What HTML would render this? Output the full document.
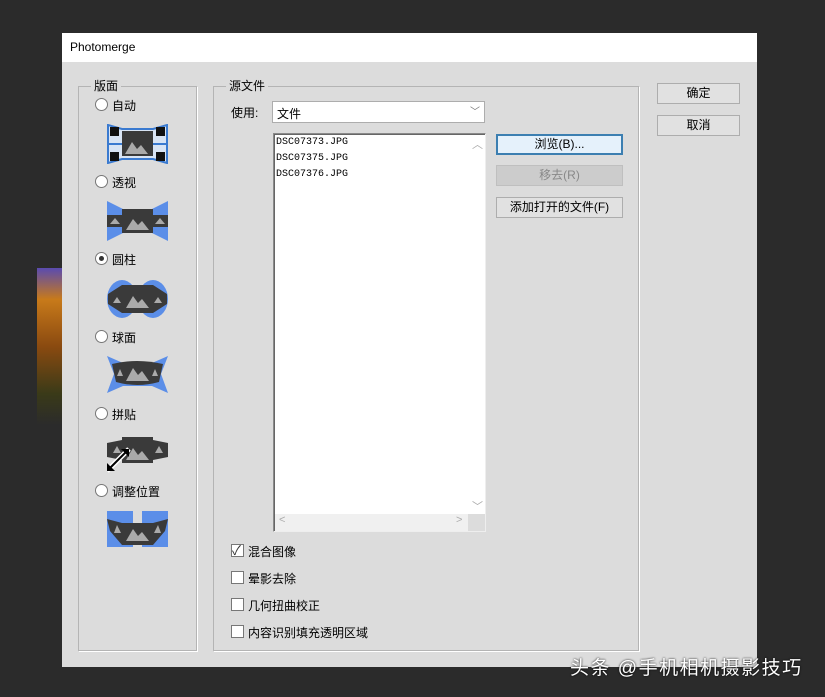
<!DOCTYPE html>
<html><head><meta charset="utf-8"><style>
*{margin:0;padding:0;box-sizing:border-box}
body{width:825px;height:697px;background:#2b2b2b;position:relative;overflow:hidden;font-family:"Liberation Sans","Noto Sans CJK SC",sans-serif;font-size:12px;color:#000}
.a{position:absolute}
.dlg{left:62px;top:33px;width:695px;height:634px;background:#dcdcdc}
.title{left:62px;top:33px;width:695px;height:29px;background:#fff;font-size:12px;padding:7px 0 0 8px}
.grp{border:1px solid #b4b4b4;box-shadow:1px 1px 0 #fff}
.lg{background:#dcdcdc;padding:0 3px;font-size:12px;line-height:13px}
.btn{background:#e1e1e1;border:1px solid #adadad;text-align:center;font-size:12px;line-height:19px}
.rad{width:13px;height:13px;border:1px solid #777;border-radius:50%;background:#fff}
.cb{width:13px;height:13px;border:1px solid #777;background:#fff}
.mono{font-family:"Liberation Mono","Noto Sans CJK SC",monospace;font-size:10px;line-height:16px}
</style></head><body>
<div class="a" style="left:37px;top:268px;width:25px;height:157px;background:linear-gradient(#5a4bb0 0,#c87a1a 20%,#8a4a10 50%,#3a3a18 80%,#2b2b2b 100%)"></div>
<div class="a dlg"></div>
<div class="a title">Photomerge</div>

<div class="a grp" style="left:78px;top:86px;width:119px;height:565px"></div>
<div class="a lg" style="left:91px;top:80px">版面</div>
<div class="a grp" style="left:213px;top:86px;width:426px;height:565px"></div>
<div class="a lg" style="left:226px;top:80px">源文件</div>

<div class="a btn" style="left:657px;top:83px;width:83px;height:21px">确定</div>
<div class="a btn" style="left:657px;top:115px;width:83px;height:21px">取消</div>

<div class="a rad" style="left:95px;top:98px"></div><div class="a" style="left:112px;top:97px">自动</div>
<div class="a rad" style="left:95px;top:175px"></div><div class="a" style="left:112px;top:174px">透视</div>
<div class="a rad" style="left:95px;top:252px"></div><div class="a" style="left:95px;top:252px;width:13px;height:13px;display:flex;align-items:center;justify-content:center"><div style="width:5px;height:5px;border-radius:50%;background:#333"></div></div><div class="a" style="left:112px;top:251px">圆柱</div>
<div class="a rad" style="left:95px;top:330px"></div><div class="a" style="left:112px;top:329px">球面</div>
<div class="a rad" style="left:95px;top:407px"></div><div class="a" style="left:112px;top:406px">拼贴</div>
<div class="a rad" style="left:95px;top:484px"></div><div class="a" style="left:112px;top:483px">调整位置</div>

<svg class="a" style="left:107px;top:124px" width="61" height="40" viewBox="0 0 61 40">
<path d="M1 1L15 5H46L60 1V39L46 35H15L1 39Z" fill="#d8e4f4" stroke="#3a7ad0" stroke-width="2"/>
<line x1="1" y1="20" x2="15" y2="20" stroke="#3a7ad0" stroke-width="2"/><line x1="46" y1="20" x2="60" y2="20" stroke="#3a7ad0" stroke-width="2"/>
<rect x="15" y="7" width="31" height="25" fill="#3a3a3a"/>
<path d="M18 30L25 18L30 25L34 21L41 30Z" fill="#aaa"/>
<rect x="3" y="3" width="9" height="9" fill="#111"/><rect x="49" y="3" width="9" height="9" fill="#111"/><rect x="3" y="28" width="9" height="9" fill="#111"/><rect x="49" y="28" width="9" height="9" fill="#111"/>
</svg>
<svg class="a" style="left:107px;top:201px" width="61" height="40" viewBox="0 0 61 40">
<path d="M0 0L16 8V32L0 40Z M61 0L45 8V32L61 40Z" fill="#5b8ee8"/>
<rect x="0" y="14" width="61" height="12" fill="#3a3a3a"/><rect x="15" y="8" width="31" height="24" fill="#3a3a3a"/>
<path d="M19 29L26 18L31 24L35 20L42 29Z M3 23L8 17L13 23Z M48 23L53 17L58 23Z" fill="#aaa"/>
</svg>
<svg class="a" style="left:107px;top:279px" width="61" height="40" viewBox="0 0 61 40">
<ellipse cx="15" cy="20" rx="15" ry="19" fill="#5b8ee8"/><ellipse cx="46" cy="20" rx="15" ry="19" fill="#5b8ee8"/>
<path d="M1 15L15 6H46L60 15V25L46 34H15L1 25Z" fill="#3a3a3a"/>
<path d="M19 29L26 17L31 24L35 20L42 29Z M6 24L10 18L14 24Z M47 24L51 18L55 24Z" fill="#aaa"/>
</svg>
<svg class="a" style="left:107px;top:356px" width="61" height="37" viewBox="0 0 61 37">
<path d="M0 0L16 7H45L61 0L54 18L61 37L45 30H16L0 37L7 18Z" fill="#5b8ee8"/>
<path d="M5 8Q30 2 56 8L52 26Q30 32 9 26Z" fill="#3a3a3a"/>
<path d="M19 25L26 12L31 19L35 15L42 25Z M10 20L13 13L16 20Z M45 20L48 13L51 20Z" fill="#aaa"/>
</svg>
<svg class="a" style="left:107px;top:433px" width="61" height="40" viewBox="0 0 61 40">
<path d="M0 10L15 7V4H46V7L61 10V24L46 27V30H15V27L0 24Z" fill="#3a3a3a"/>
<path d="M19 27L26 15L31 22L35 18L42 27Z M6 20L10 13L14 20Z M48 20L52 13L56 20Z" fill="#aaa"/>
<path d="M0 38L22 16" stroke="#fff" stroke-width="5"/><path d="M1 37L21 17" stroke="#000" stroke-width="2"/>
<path d="M0 38V30L8 38Z M22 16H14L22 24Z" fill="#000"/>
</svg>
<svg class="a" style="left:107px;top:511px" width="61" height="36" viewBox="0 0 61 36">
<rect x="0" y="0" width="26" height="36" fill="#5b8ee8"/><rect x="35" y="0" width="26" height="36" fill="#5b8ee8"/>
<path d="M0 8L15 12H46L61 8L58 20L46 34H15L3 20Z" fill="#3a3a3a"/>
<path d="M19 30L26 18L31 25L35 21L42 30Z M7 22L10 14L14 22Z M47 22L51 14L54 22Z" fill="#aaa"/>
</svg>

<div class="a" style="left:231px;top:104px">使用:</div>
<div class="a" style="left:272px;top:101px;width:213px;height:22px;background:#fff;border:1px solid #adadad;padding:3px 0 0 4px">文件<span style="position:absolute;right:4px;top:1px;color:#777;font-size:10px">﹀</span></div>
<div class="a" style="left:273px;top:133px;width:213px;height:399px;background:#fff;border:1px solid #8a8a8a;border-right-color:#eee;border-bottom-color:#eee;box-shadow:inset 1px 1px 0 #666"></div>
<div class="a" style="left:275px;top:514px;width:210px;height:17px;background:#f0f0f0"></div>
<div class="a" style="left:468px;top:514px;width:17px;height:17px;background:#dcdcdc"></div>
<div class="a" style="left:472px;top:136px;color:#aaa;font-size:11px">︿</div>
<div class="a" style="left:472px;top:498px;color:#aaa;font-size:11px">﹀</div>
<div class="a" style="left:279px;top:514px;color:#aaa;font-size:11px">&lt;</div>
<div class="a" style="left:456px;top:514px;color:#aaa;font-size:11px">&gt;</div>
<div class="a mono" style="left:276px;top:135px">DSC07373.JPG<br>DSC07375.JPG<br>DSC07376.JPG</div>

<div class="a btn" style="left:496px;top:134px;width:127px;height:21px;border:2px solid #3c7fb1;background:#e5f1fb;line-height:17px">浏览(B)...</div>
<div class="a btn" style="left:496px;top:165px;width:127px;height:21px;background:#ccc;border-color:#bfbfbf;color:#888">移去(R)</div>
<div class="a btn" style="left:496px;top:197px;width:127px;height:21px">添加打开的文件(F)</div>

<div class="a cb" style="left:231px;top:544px"></div><div class="a" style="left:232px;top:540px;font-size:13px;color:#333">✓</div><div class="a" style="left:248px;top:543px">混合图像</div>
<div class="a cb" style="left:231px;top:571px"></div><div class="a" style="left:248px;top:570px">晕影去除</div>
<div class="a cb" style="left:231px;top:598px"></div><div class="a" style="left:248px;top:597px">几何扭曲校正</div>
<div class="a cb" style="left:231px;top:625px"></div><div class="a" style="left:248px;top:624px">内容识别填充透明区域</div>

<div class="a" style="left:570px;top:653px;color:#fff;font-size:19px;letter-spacing:1.5px;text-shadow:0 0 2px #000">头条 @手机相机摄影技巧</div>
</body></html>
